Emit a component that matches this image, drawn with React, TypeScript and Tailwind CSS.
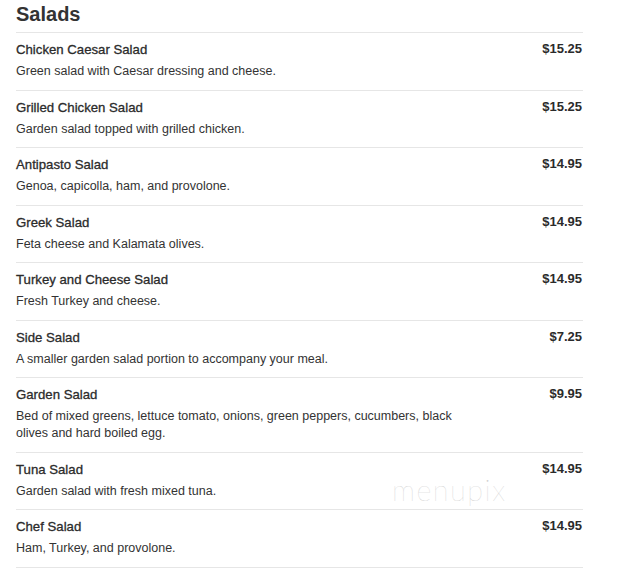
const items = [
  { name: 'Chicken Caesar Salad', desc: 'Green salad with Caesar dressing and cheese.', price: '$15.25' },
  { name: 'Grilled Chicken Salad', desc: 'Garden salad topped with grilled chicken.', price: '$15.25' },
  { name: 'Antipasto Salad', desc: 'Genoa, capicolla, ham, and provolone.', price: '$14.95' },
  { name: 'Greek Salad', desc: 'Feta cheese and Kalamata olives.', price: '$14.95' },
  { name: 'Turkey and Cheese Salad', desc: 'Fresh Turkey and cheese.', price: '$14.95' },
  { name: 'Side Salad', desc: 'A smaller garden salad portion to accompany your meal.', price: '$7.25' },
  {
    name: 'Garden Salad',
    desc: 'Bed of mixed greens, lettuce tomato, onions, green peppers, cucumbers, black olives and hard boiled egg.',
    price: '$9.95',
  },
  { name: 'Tuna Salad', desc: 'Garden salad with fresh mixed tuna.', price: '$14.95' },
  { name: 'Chef Salad', desc: 'Ham, Turkey, and provolone.', price: '$14.95' },
]

export default function App() {
  return (
    <div className="relative min-h-[569px] w-[626px] bg-white pl-4 pr-[43px] text-[#333] font-['Liberation_Sans',Arial,sans-serif]">
      <h2 className="h-8 pt-[3px] text-[20px] leading-[22px] font-bold">Salads</h2>
      {items.map((it) => (
        <div key={it.name} className="flex justify-between border-t border-[#e6e6e6] pt-2 pb-[9.5px]">
          <div className="w-[456px]">
            <div className="pt-px text-[13.2px] leading-4 text-[#2b2b2b] [-webkit-text-stroke:0.3px_#2b2b2b]">{it.name}</div>
            <p className="mt-[5px] text-[12.5px] leading-[17px]">{it.desc}</p>
          </div>
          <div className="pr-px text-[13px] leading-4 font-bold text-[#2b2b2b]">{it.price}</div>
        </div>
      ))}
      <div className="border-t border-[#e6e6e6]" />
      <div className="pointer-events-none absolute left-[392px] top-[468px] font-['Lato',sans-serif] text-[29px] font-thin tracking-[1.5px] text-[#cccccc]">
        menupix
      </div>
    </div>
  )
}
